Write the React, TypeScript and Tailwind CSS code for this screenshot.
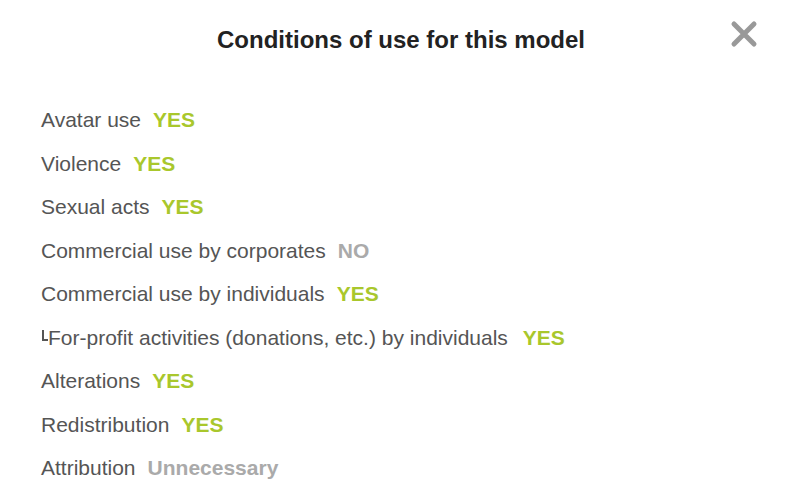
const rows: { label: string; value: string; ok: boolean; sub?: boolean }[] = [
  { label: 'Avatar use', value: 'YES', ok: true },
  { label: 'Violence', value: 'YES', ok: true },
  { label: 'Sexual acts', value: 'YES', ok: true },
  { label: 'Commercial use by corporates', value: 'NO', ok: false },
  { label: 'Commercial use by individuals', value: 'YES', ok: true },
  { label: 'For-profit activities (donations, etc.) by individuals', value: 'YES', ok: true, sub: true },
  { label: 'Alterations', value: 'YES', ok: true },
  { label: 'Redistribution', value: 'YES', ok: true },
  { label: 'Attribution', value: 'Unnecessary', ok: false }
]

export default function App() {
  return (
    <div className="w-[798px] h-[504px] bg-white overflow-hidden font-['Liberation_Sans',Arial,sans-serif]">
      <div className="relative pt-[26px] h-[98px]">
        <h1 className="text-center pl-[4px] text-[24px] leading-[28px] font-bold text-[#222]">
          Conditions of use for this model
        </h1>
        {/* close */}
        <button className="absolute right-[40px] top-[20px] w-[28px] h-[28px] flex items-center justify-center">
          <svg width="28" height="28" viewBox="0 0 28 28">
            <path
              d="M4 4 L24 24 M24 4 L4 24"
              stroke="#999"
              strokeWidth="5"
              strokeLinecap="round"
              fill="none"
            />
          </svg>
        </button>
      </div>
      <ul className="pl-[41px] flex flex-col">
        {rows.map((row, idx) => (
          <li key={idx} className="leading-[43.5px] text-[21px] text-[#555] whitespace-nowrap">
            {row.sub && (
              <span className="inline-block w-[6px] h-[11px] ml-[1px] border-l-2 border-b-2 border-[#555] align-[4px]" />
            )}
            {row.label}
            <span
              className={
                'font-bold ' +
                (row.sub ? 'ml-[15px] ' : 'ml-[12px] ') +
                (row.ok ? 'text-[#a9c72c]' : 'text-[#aaa]')
              }
            >
              {row.value}
            </span>
          </li>
        ))}
      </ul>
    </div>
  )
}
